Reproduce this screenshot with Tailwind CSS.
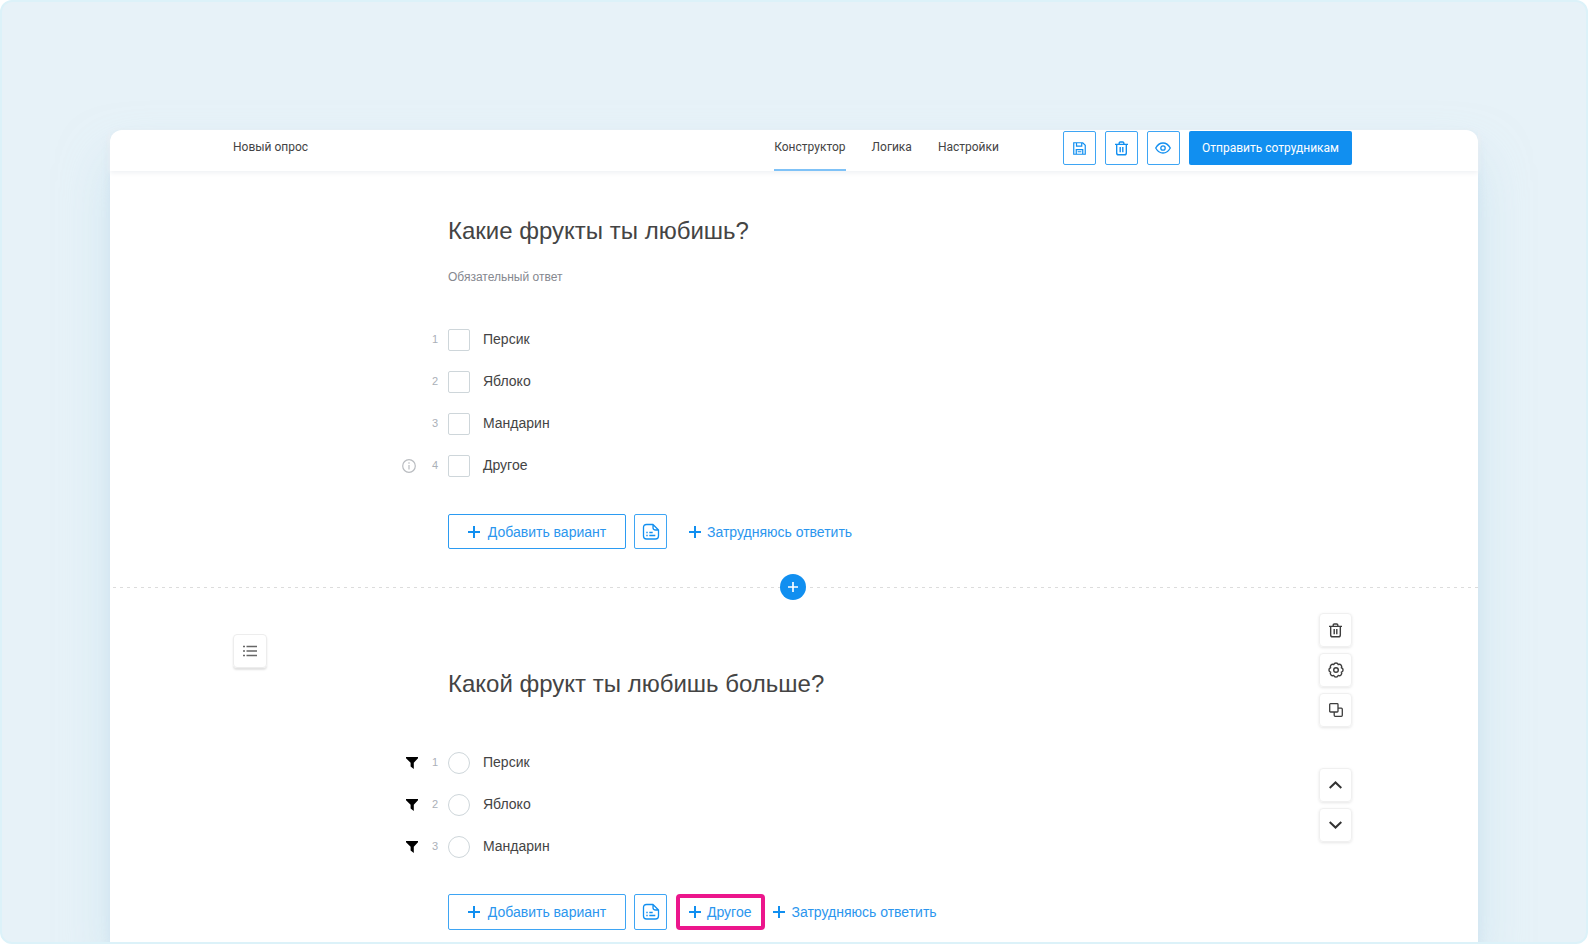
<!DOCTYPE html>
<html lang="ru">
<head>
<meta charset="utf-8">
<meta name="viewport" content="width=device-width, initial-scale=1">
<title>Новый опрос</title>
<script src="https://cdn.jsdelivr.net/npm/@tailwindcss/browser@4"></script>
</head>
<body class="bg-white font-['Liberation_Sans',Arial,sans-serif] text-[#444]">
<svg class="hidden">
  <symbol id="plus" viewBox="0 0 12 12"><path d="M6 0v12M0 6h12" stroke="currentColor" stroke-width="2" fill="none"/></symbol>
  <symbol id="trash" viewBox="0 0 14 16"><path d="M0 3.500h14M4.500 3.200V2.200Q4.500 1 5.700 1h2.600Q9.500 1 9.500 2.200v1M1.800 3.800v9Q1.800 14.800 3.800 14.800h6.400Q12.200 14.800 12.200 12.800V3.800M5.600 6.400v5.600M8.400 6.400v5.600" stroke="currentColor" stroke-width="1.500" fill="none"/></symbol>
  <symbol id="doc" viewBox="0 0 18 18"><path d="M11 1.500H4.500Q1.500 1.500 1.500 4.500v8.500Q1.500 16 4.500 16h9Q16.500 16 16.500 13V7zM11 1.500v3Q11 7 13.500 7h3" stroke="currentColor" stroke-width="1.300" fill="none" stroke-linejoin="round"/><path d="M4.300 9.500h1.400M4.300 12.500h1.400M7.300 9.500h3.400M7.300 12.500h6" stroke="currentColor" stroke-width="1.400" fill="none"/></symbol>
  <symbol id="filter" viewBox="0 0 12 12"><path d="M0 0h12v1.200L7.800 5.800V12L4.600 9.600V5.800L0 1.200z" fill="currentColor"/></symbol>
</svg>
<div class="flex min-h-screen flex-col rounded-xl border-2 border-[#dcf2f9] bg-[#e7f2f8] px-[108px] pt-32 overflow-hidden">
  <div class="flex grow flex-col rounded-t-xl bg-white shadow-[0_30px_50px_#b9dbea88,0_5px_10px_#c0d4ea60]">
    <header class="flex h-[41px] items-start pr-[126px] pl-[123px] shadow-[0_2px_5px_#eff1f4] font-[Roboto,sans-serif] text-xs leading-[34px]">
      <span>Новый опрос</span>
      <nav class="ml-auto flex gap-[26px] self-stretch">
        <a href="#" class="border-b-2 border-[#7fc2f7]">Конструктор</a>
        <a href="#">Логика</a>
        <a href="#">Настройки</a>
      </nav>
      <div class="mt-px ml-16 flex gap-[9px] text-[#118ff0]">
        <button aria-label="Сохранить" class="flex h-[34px] w-[33px] items-center justify-center rounded-xs border border-[#3ea5f4]">
          <svg class="size-[13px]" viewBox="0 0 14 14" fill="none" stroke="currentColor" stroke-width="1.300"><path d="M.8 2.200V.8h9.700L13.200 3.500v9.700H.8zM3.800.8v3.700h5.600V.8M3.500 13V8.200h7V13M5 10.500h4"/></svg>
        </button>
        <button aria-label="Удалить" class="flex h-[34px] w-[33px] items-center justify-center rounded-xs border border-[#3ea5f4]"><svg class="h-[15px] w-[13px]"><use href="#trash"/></svg></button>
        <button aria-label="Просмотр" class="flex h-[34px] w-[33px] items-center justify-center rounded-xs border border-[#3ea5f4]">
          <svg class="h-3 w-4" viewBox="0 0 16 12" fill="none" stroke="currentColor" stroke-width="1.300"><path d="M.7 6Q3.500 1 8 1t7.300 5Q12.500 11 8 11T.7 6z"/><circle cx="8" cy="6" r="2.200"/></svg>
        </button>
        <button class="h-[34px] rounded-xs bg-[#118ff0] px-[13px] leading-[32px] text-white">Отправить сотрудникам</button>
      </div>
    </header>
    <main>
      <section class="pt-11 pr-[126px] pl-[338px]">
        <h2 class="text-2xl leading-8">Какие фрукты ты любишь?</h2>
        <p class="mt-5 text-xs leading-5 text-[#85888f]">Обязательный ответ</p>
        <ul class="-ml-12 mt-8 text-sm">
          <li class="flex h-[42px] items-center"><span class="w-[38px] text-right text-[11px] text-[#aab0b8]">1</span><input id="a1" type="checkbox" class="ml-[10px] size-[22px] appearance-none rounded-xs border border-[#ced6da]"><label for="a1" class="ml-[13px] pb-[3px]">Персик</label></li>
          <li class="flex h-[42px] items-center"><span class="w-[38px] text-right text-[11px] text-[#aab0b8]">2</span><input id="a2" type="checkbox" class="ml-[10px] size-[22px] appearance-none rounded-xs border border-[#ced6da]"><label for="a2" class="ml-[13px] pb-[3px]">Яблоко</label></li>
          <li class="flex h-[42px] items-center"><span class="w-[38px] text-right text-[11px] text-[#aab0b8]">3</span><input id="a3" type="checkbox" class="ml-[10px] size-[22px] appearance-none rounded-xs border border-[#ced6da]"><label for="a3" class="ml-[13px] pb-[3px]">Мандарин</label></li>
          <li class="flex h-[42px] items-center"><svg class="ml-[2px] size-[14px] text-[#b9bcc0]" viewBox="0 0 14 14" fill="none" stroke="currentColor" stroke-width="1.200"><circle cx="7" cy="7" r="6.300"/><path d="M7 3.300v1.400M7 6v4.500"/></svg><span class="w-[22px] text-right text-[11px] text-[#aab0b8]">4</span><input id="a4" type="checkbox" class="ml-[10px] size-[22px] appearance-none rounded-xs border border-[#ced6da]"><label for="a4" class="ml-[13px] pb-[3px]">Другое</label></li>
        </ul>
        <div class="mt-[27px] flex h-[35px] items-stretch text-sm text-[#2b96ee]">
          <button class="flex w-[178px] items-center justify-center gap-2 rounded-xs border border-[#2b9bf2]"><svg class="size-3 text-[#118ff0]"><use href="#plus"/></svg>Добавить вариант</button>
          <button aria-label="Список" class="ml-2 flex w-[33px] items-center justify-center rounded-xs border border-[#3ea5f4] text-[#118ff0]"><svg class="size-[18px]"><use href="#doc"/></svg></button>
          <button class="ml-[9px] flex items-center gap-[6px] px-[13px]"><svg class="size-3 text-[#118ff0]"><use href="#plus"/></svg>Затрудняюсь ответить</button>
        </div>
      </section>
      <div class="mt-[25px] flex items-center">
        <span class="ml-[3px] h-px w-[calc(50%-17px)] bg-[repeating-linear-gradient(90deg,#dcdcdc_0_3px,transparent_3px_7px)]"></span>
        <button aria-label="Добавить вопрос" class="flex size-[26px] items-center justify-center rounded-full bg-[#118ff0] text-white"><svg class="size-[10px]"><use href="#plus"/></svg></button>
        <span class="h-px grow bg-[repeating-linear-gradient(90deg,transparent_0_4px,#dcdcdc_4px_7px)]"></span>
      </div>
      <section class="flex items-start pt-[13px] pr-[126px] pl-[123px]">
        <button aria-label="Тип вопроса" class="mt-[21px] flex size-[34px] items-center justify-center rounded-sm border border-[#ededed] shadow-[0_2px_2px_#e2e2e2]">
          <svg class="h-3 w-[14px]" viewBox="0 0 14 12" fill="none" stroke="#666" stroke-width="1.300"><path d="M0 1.500h2M3.500 1.500h10.500M0 6h2M3.500 6h10.500M0 10.500h2M3.500 10.500h10.500"/></svg>
        </button>
        <div class="ml-[181px] grow pt-[55px]">
          <h2 class="text-2xl leading-8">Какой фрукт ты любишь больше?</h2>
          <ul class="-ml-12 mt-[42px] text-sm">
            <li class="flex h-[42px] items-center"><svg class="ml-[6px] size-3 text-black"><use href="#filter"/></svg><span class="w-5 text-right text-[11px] text-[#aab0b8]">1</span><input id="b1" name="b" type="radio" class="ml-[10px] size-[22px] appearance-none rounded-full border border-[#ced6da]"><label for="b1" class="ml-[13px] pb-[3px]">Персик</label></li>
            <li class="flex h-[42px] items-center"><svg class="ml-[6px] size-3 text-black"><use href="#filter"/></svg><span class="w-5 text-right text-[11px] text-[#aab0b8]">2</span><input id="b2" name="b" type="radio" class="ml-[10px] size-[22px] appearance-none rounded-full border border-[#ced6da]"><label for="b2" class="ml-[13px] pb-[3px]">Яблоко</label></li>
            <li class="flex h-[42px] items-center"><svg class="ml-[6px] size-3 text-black"><use href="#filter"/></svg><span class="w-5 text-right text-[11px] text-[#aab0b8]">3</span><input id="b3" name="b" type="radio" class="ml-[10px] size-[22px] appearance-none rounded-full border border-[#ced6da]"><label for="b3" class="ml-[13px] pb-[3px]">Мандарин</label></li>
          </ul>
          <div class="mt-[26px] flex h-9 items-stretch text-sm text-[#2b96ee]">
            <button class="flex w-[178px] items-center justify-center gap-2 rounded-xs border border-[#3ea5f4]"><svg class="size-3 text-[#118ff0]"><use href="#plus"/></svg>Добавить вариант</button>
            <button aria-label="Список" class="ml-2 flex w-[33px] items-center justify-center rounded-xs border border-[#3ea5f4] text-[#118ff0]"><svg class="size-[18px]"><use href="#doc"/></svg></button>
            <button class="ml-[9px] flex items-center gap-[6px] rounded-sm border-4 border-[#ec168c] pr-[10px] pl-[9px]"><svg class="size-3 text-[#118ff0]"><use href="#plus"/></svg>Другое</button>
            <button class="ml-2 flex items-center gap-[6px]"><svg class="size-3 text-[#118ff0]"><use href="#plus"/></svg>Затрудняюсь ответить</button>
          </div>
        </div>
        <div class="flex flex-col gap-[6px] text-[#3d3d3d]">
          <button aria-label="Удалить" class="flex h-[34px] w-[33px] items-center justify-center rounded-sm border border-[#f0f0f0] shadow-[0_1px_3px_#e6e6e6]"><svg class="h-[15px] w-[13px]"><use href="#trash"/></svg></button>
          <button aria-label="Настройки" class="flex h-[34px] w-[33px] items-center justify-center rounded-sm border border-[#f0f0f0] shadow-[0_1px_3px_#e6e6e6]"><svg class="size-4" viewBox="0 0 16 16" fill="none" stroke="currentColor" stroke-width="1.400" stroke-linejoin="round"><path d="M13.360 5.780A2.300 2.300 0 0 1 13.360 10.220A2.300 2.300 0 0 1 10.220 13.360A2.300 2.300 0 0 1 5.780 13.360A2.300 2.300 0 0 1 2.640 10.220A2.300 2.300 0 0 1 2.640 5.780A2.300 2.300 0 0 1 5.780 2.640A2.300 2.300 0 0 1 10.220 2.640A2.300 2.300 0 0 1 13.360 5.780z"/><circle cx="8" cy="8" r="2.300"/></svg></button>
          <button aria-label="Копировать" class="flex h-[34px] w-[33px] items-center justify-center rounded-sm border border-[#f0f0f0] shadow-[0_1px_3px_#e6e6e6]"><svg class="size-[14px]" viewBox="0 0 14 14" fill="none" stroke="currentColor" stroke-width="1.300"><rect x=".7" y=".7" width="8.300" height="8.300" rx=".8"/><path d="M9 5.200h3.300q1 0 1 1v6.100q0 1-1 1H6.200q-1 0-1-1V9"/></svg></button>
          <button aria-label="Вверх" class="mt-[35px] flex h-[34px] w-[33px] items-center justify-center rounded-sm border border-[#f0f0f0] shadow-[0_1px_3px_#e6e6e6]"><svg class="h-2 w-[13px]" viewBox="0 0 13 8" fill="none" stroke="#333" stroke-width="2"><path d="M.7 7 6.500 1.500 12.300 7"/></svg></button>
          <button aria-label="Вниз" class="flex h-[34px] w-[33px] items-center justify-center rounded-sm border border-[#f0f0f0] shadow-[0_1px_3px_#e6e6e6]"><svg class="h-2 w-[13px]" viewBox="0 0 13 8" fill="none" stroke="#333" stroke-width="2"><path d="M.7 1 6.500 6.500 12.300 1"/></svg></button>
        </div>
      </section>
    </main>
  </div>
</div>
</body>
</html>
